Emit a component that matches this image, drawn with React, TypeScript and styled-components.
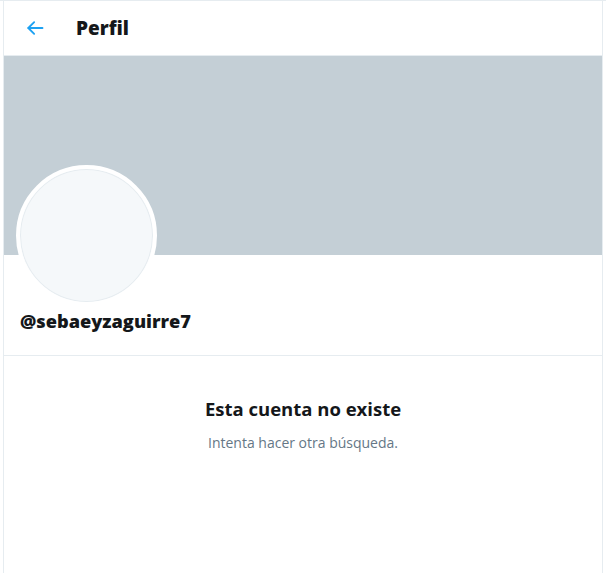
import React from "react";
import styled, { createGlobalStyle } from "styled-components";

const Global = createGlobalStyle`
  html, body { margin: 0; padding: 0; background: #ffffff; }
  body {
    font-family: "Open Sans", "Noto Sans", sans-serif;
    color: #14171a;
    border-top: 1px solid #e6ecf0;
  }
`;

const Column = styled.main`
  width: 600px;
  margin: 0 auto;
  box-sizing: border-box;
  border-left: 1px solid #e6ecf0;
  border-right: 1px solid #e6ecf0;
  min-height: 572px;
  display: flex;
  flex-direction: column;
`;

const Header = styled.header`
  height: 54px;
  border-bottom: 1px solid #e6ecf0;
  display: flex;
  align-items: center;
  padding: 0 17px;
  gap: 27px;
`;

const BackButton = styled.button`
  width: 28px;
  height: 28px;
  border: none;
  background: transparent;
  padding: 0;
  display: flex;
  align-items: center;
  justify-content: center;
  color: #1da1f2;
  cursor: pointer;
`;

const Title = styled.h2`
  margin: 0;
  font-size: 19px;
  font-weight: 800;
  color: #14171a;
`;

const Banner = styled.div`
  height: 199px;
  background: #c4cfd6;
`;

const ProfileInfo = styled.section`
  padding: 0 12px 21px;
  border-bottom: 1px solid #e6ecf0;
  display: flex;
  flex-direction: column;
`;

const Avatar = styled.div`
  width: 133px;
  height: 133px;
  margin-top: -90px;
  border-radius: 50%;
  border: 4px solid #ffffff;
  background: #f5f8fa;
  box-shadow: inset 0 0 0 1px #e6ecf0;
`;

const Handle = styled.div`
  margin-top: 2px;
  padding-left: 4px;
  font-size: 18.2px;
  font-weight: 800;
  line-height: 26px;
`;

const Empty = styled.section`
  display: flex;
  flex-direction: column;
  align-items: center;
  padding-top: 41px;
  gap: 12px;
`;

const EmptyTitle = styled.div`
  font-size: 18.5px;
  font-weight: 700;
  line-height: 24px;
`;

const EmptyText = styled.div`
  font-size: 14px;
  color: #657786;
  line-height: 20px;
`;

export default function App() {
  return (
    <>
      <Global />
      <Column>
        <Header>
          <BackButton aria-label="Atrás">
            <svg width="20" height="20" viewBox="0 0 24 24" fill="none" stroke="currentColor" strokeWidth="2.2" strokeLinecap="round" strokeLinejoin="round">
              <path d="M21 12H4" />
              <path d="M11 5l-7 7 7 7" />
            </svg>
          </BackButton>
          <Title>Perfil</Title>
        </Header>
        <Banner />
        <ProfileInfo>
          <Avatar />
          <Handle>@sebaeyzaguirre7</Handle>
        </ProfileInfo>
        <Empty>
          <EmptyTitle>Esta cuenta no existe</EmptyTitle>
          <EmptyText>Intenta hacer otra búsqueda.</EmptyText>
        </Empty>
      </Column>
    </>
  );
}
